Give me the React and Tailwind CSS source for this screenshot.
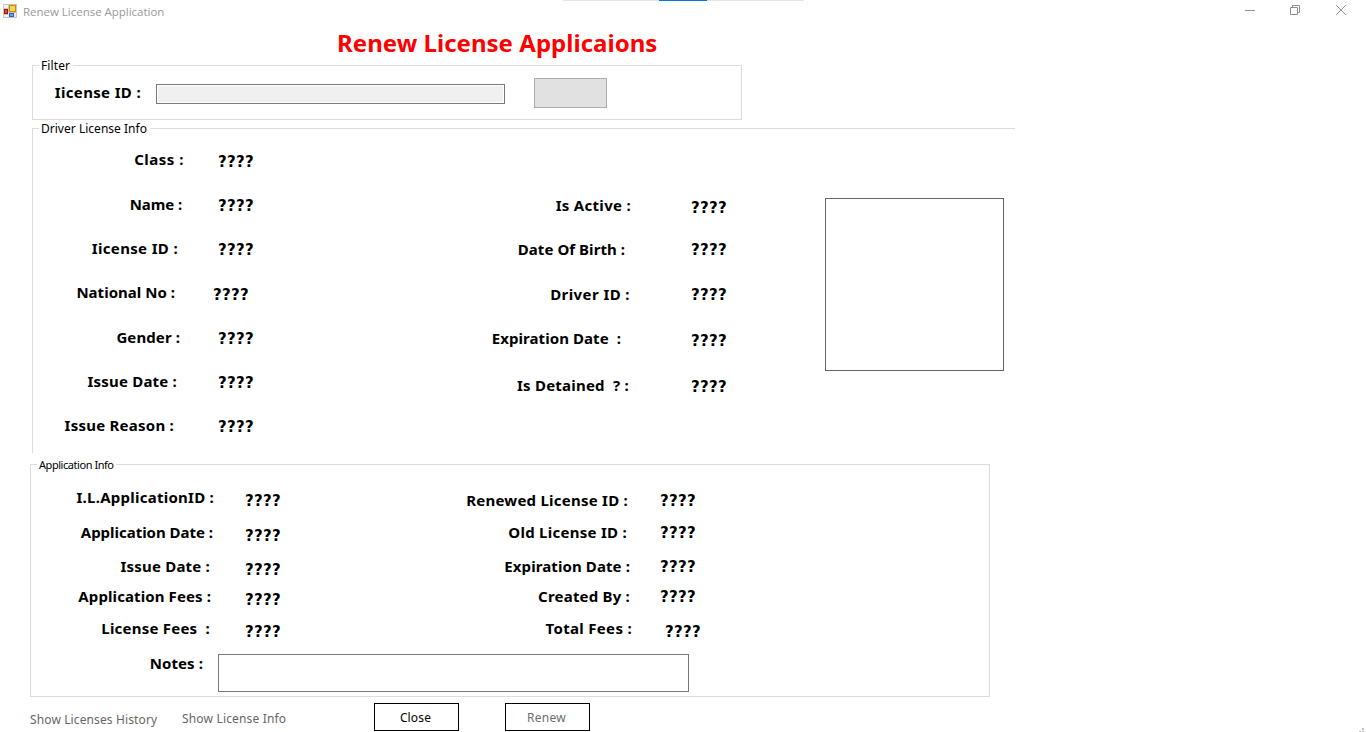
const driverLeft = [
  { label: 'Class :', cell: 'w-[185px] pr-[34px] tracking-[0.5px]', row: 'h-[45px]', value: 'pt-[2px]' },
  { label: 'Name :', cell: 'w-[185px] pr-[36px] tracking-[-0.1px]', row: 'h-[44px]', value: 'pt-px' },
  { label: 'Iicense ID :', cell: 'w-[185px] pr-[40px] tracking-[0.35px]', row: 'h-[44px]', value: 'pt-px' },
  { label: 'National No :', cell: 'w-[180px] pr-[38px] tracking-[0.02px]', row: 'h-[45px]', value: 'pt-[2px]' },
  { label: 'Gender :', cell: 'w-[185px] pr-[38px] tracking-[0.1px]', row: 'h-[44px]', value: 'pt-px' },
  { label: 'Issue Date :', cell: 'w-[185px] pr-[41px] tracking-[0.2px]', row: 'h-[44px]', value: 'pt-px' },
  { label: 'Issue Reason :', cell: 'w-[185px] pr-[44px] tracking-[0.24px]', row: 'h-[20px]', value: 'pt-px' },
];

const driverRight = [
  { label: 'Is Active :', cell: 'w-[231px] pr-[60px] tracking-[0.3px]', row: 'h-[44px]', value: 'pt-[2px]' },
  { label: 'Date Of Birth :', cell: 'w-[231px] pr-[66px] tracking-[0.05px]', row: 'h-[45px]', value: '' },
  { label: 'Driver ID :', cell: 'w-[231px] pr-[61px] tracking-[0.42px]', row: 'h-[44px]', value: '' },
  { label: 'Expiration Date  :', cell: 'w-[231px] pr-[70px] tracking-[0.08px]', row: 'h-[47px]', value: 'pt-[2px]' },
  { label: 'Is Detained  ? :', cell: 'w-[231px] pr-[62px] tracking-[0.22px]', row: 'h-[20px]', value: 'pt-px' },
];

const applicationLeft = [
  { label: 'I.L.ApplicationID :', cell: 'w-[214px] pr-[31px] tracking-[0.25px]', row: 'h-[35px]', value: 'pt-[3px]' },
  { label: 'Application Date :', cell: 'w-[214px] pr-[32px] tracking-[-0.02px]', row: 'h-[34px]', value: 'pt-[3px]' },
  { label: 'Issue Date :', cell: 'w-[214px] pr-[35px] tracking-[0.2px]', row: 'h-[30px]', value: 'pt-[3px]' },
  { label: 'Application Fees :', cell: 'w-[214px] pr-[34px] tracking-[0.1px]', row: 'h-[32px]', value: 'pt-[3px]' },
  { label: 'License Fees  :', cell: 'w-[214px] pr-[35px] tracking-[0.22px]', row: 'h-[20px]', value: 'pt-[3px]' },
];

const applicationRight = [
  { label: 'Renewed License ID :', cell: 'w-[240px] pr-[32px] pt-[3px] tracking-[0.24px]', row: 'h-[35px]', value: 'pt-[3px]' },
  { label: 'Old License ID :', cell: 'w-[240px] pr-[33px] tracking-[0.27px]', row: 'h-[34px]', value: '' },
  { label: 'Expiration Date :', cell: 'w-[240px] pr-[30px] tracking-[0.1px]', row: 'h-[30px]', value: '' },
  { label: 'Created By :', cell: 'w-[240px] pr-[30px] tracking-[0.2px]', row: 'h-[32px]', value: '' },
  { label: 'Total Fees :', cell: 'w-[245px] pr-[33px] tracking-[0.32px]', row: 'h-[20px]', value: 'pt-[3px]' },
];

const strong = 'whitespace-pre text-[15px] leading-5 font-bold';

function Fields({ items, className }) {
  return (
    <div className={className}>
      {items.map((f) => (
        <div key={f.label} className={`flex items-start ${f.row}`}>
          <span className={`shrink-0 text-right ${strong} ${f.cell}`}>{f.label}</span>
          <span className={`mt-px font-['DejaVu_Sans'] tracking-[0.3px] ${strong} ${f.value}`}>????</span>
        </div>
      ))}
    </div>
  );
}

function FormIcon() {
  return (
    <svg width="14" height="14" viewBox="0 0 14 14" shapeRendering="crispEdges">
      <rect width="14" height="14" fill="#c6c6c6" />
      <rect x="1" y="1" width="4" height="3" fill="#f4f4f4" />
      <rect x="1" y="11" width="4" height="2" fill="#f4f4f4" />
      <rect x="5" y="9" width="8" height="4" fill="#e8e8e8" />
      <rect x="1" y="5" width="4" height="5" fill="#a81408" />
      <rect x="2" y="6" width="2" height="3" fill="#d8503c" />
      <rect x="6" y="1" width="7" height="7" fill="#c98a08" />
      <rect x="7" y="2" width="5" height="5" fill="#fcd34c" />
      <rect x="6" y="9" width="5" height="4" fill="#2a60c8" />
      <rect x="7" y="10" width="3" height="2" fill="#6f9ff4" />
    </svg>
  );
}

function TitleBar() {
  return (
    <header className="relative flex h-[27px] shrink-0 items-start">
      <div className="absolute top-0 left-[563px] flex h-px w-[241px] bg-[#e5e5e5] pl-24">
        <div className="h-px w-12 bg-[#0078d7]" />
      </div>
      <div className="flex grow items-start pt-1 pl-[3px]">
        <FormIcon />
        <span className="ml-[6px] font-['Open_Sans'] text-[11.5px] leading-4 tracking-[-0.02px] text-[#999]">
          Renew License Application
        </span>
      </div>
      <div className="flex gap-[35px] pt-[5px] pr-5 text-[#8f8f8f]">
        <svg width="10" height="10" fill="none" stroke="currentColor">
          <path d="M0 5.5H10" />
        </svg>
        <svg width="10" height="10" fill="none" stroke="currentColor">
          <path d="M.5 2.5H7.5V9.5H.5ZM2.5 2.5V.5H9.5V7.5H7.5" />
        </svg>
        <svg width="11" height="10" fill="none" stroke="currentColor" className="-mr-px ml-px">
          <path d="M.2 .2L9.8 9.8M9.8 .2L.2 9.8" />
        </svg>
      </div>
    </header>
  );
}

export default function App() {
  return (
    <div className="relative flex h-[732px] w-[1366px] flex-col overflow-hidden bg-white font-['Noto_Sans',sans-serif] text-black">
      <TitleBar />
      <h1 className="ml-[337px] h-8 shrink-0 text-2xl leading-8 font-bold tracking-[0.03px] whitespace-nowrap text-[#ff0000]">
        Renew License Applicaions
      </h1>

      <section className="mt-1.5 ml-8 h-[55px] w-[710px] shrink-0 border border-[#dcdcdc]">
        <h2 className="-mt-[9px] ml-1.5 h-4 w-[34px] bg-white pt-px pl-[2px] text-xs leading-4 tracking-[0.1px]">Filter</h2>
        <div className="flex items-start pt-[5px]">
          <span className={`mt-1 w-[123px] pr-[15px] text-right tracking-[0.35px] ${strong}`}>Iicense ID :</span>
          <div className="mt-1.5 h-5 w-[349px] border border-[#7a7a7a] p-px">
            <div className="h-full bg-[#f0f0f0]" />
          </div>
          <button className="ml-[29px] h-[30px] w-[73px] border border-[#adadad] bg-[#e1e1e1]" />
        </div>
      </section>

      <section className="mt-2 ml-8 h-[325px] w-[983px] shrink-0 border-t border-l border-[#dcdcdc]">
        <h2 className="-mt-[9px] ml-1.5 h-4 w-[111px] bg-white pt-px pl-[2px] text-xs leading-4 tracking-[0.02px]">Driver License Info</h2>
        <div className="flex items-start">
          <Fields items={driverLeft} className="w-[427px] pt-[13px]" />
          <Fields items={driverRight} className="w-[300px] pt-[59px]" />
          <div className="mt-[62px] ml-[65px] h-[173px] w-[179px] border border-[#646464]" />
        </div>
      </section>

      <section className="mt-[11px] ml-[30px] h-[233px] w-[960px] shrink-0 border border-[#dcdcdc]">
        <h2 className="-mt-2 ml-1.5 h-4 w-[79px] bg-white pl-[2px] text-[11px] leading-4 tracking-[-0.45px] whitespace-nowrap">
          Application Info
        </h2>
        <div className="flex h-[180px] items-start pt-[14px]">
          <Fields items={applicationLeft} className="w-[389px]" />
          <Fields items={applicationRight} />
        </div>
        <div className="flex items-start">
          <span className={`w-[187px] pr-[15px] text-right tracking-[0.08px] ${strong}`}>Notes :</span>
          <div className="mt-px h-[38px] w-[471px] border border-[#7a7a7a]" />
        </div>
      </section>

      <footer className="flex items-start pt-1.5 pl-[30px] text-xs leading-4">
        <a className="mt-[9px] w-[152px] tracking-[0.12px] whitespace-nowrap text-[#666]">Show Licenses History</a>
        <a className="mt-2 w-[192px] tracking-[0.17px] whitespace-nowrap text-[#666]">Show License Info</a>
        <button className="h-7 w-[85px] border border-black pt-[2px] pr-[2px] tracking-[0.15px]">Close</button>
        <button className="ml-[46px] h-7 w-[85px] border border-black pt-[2px] pr-[2px] tracking-[0.25px] text-[#6d6d6d]">Renew</button>
      </footer>

      <svg className="absolute right-0 bottom-0" width="8" height="5" fill="#bfbfbf">
        <rect x="4" y="1" width="2" height="2" />
        <rect x="4" y="4" width="2" height="1" />
        <rect x="1" y="4" width="2" height="1" />
      </svg>
    </div>
  );
}
